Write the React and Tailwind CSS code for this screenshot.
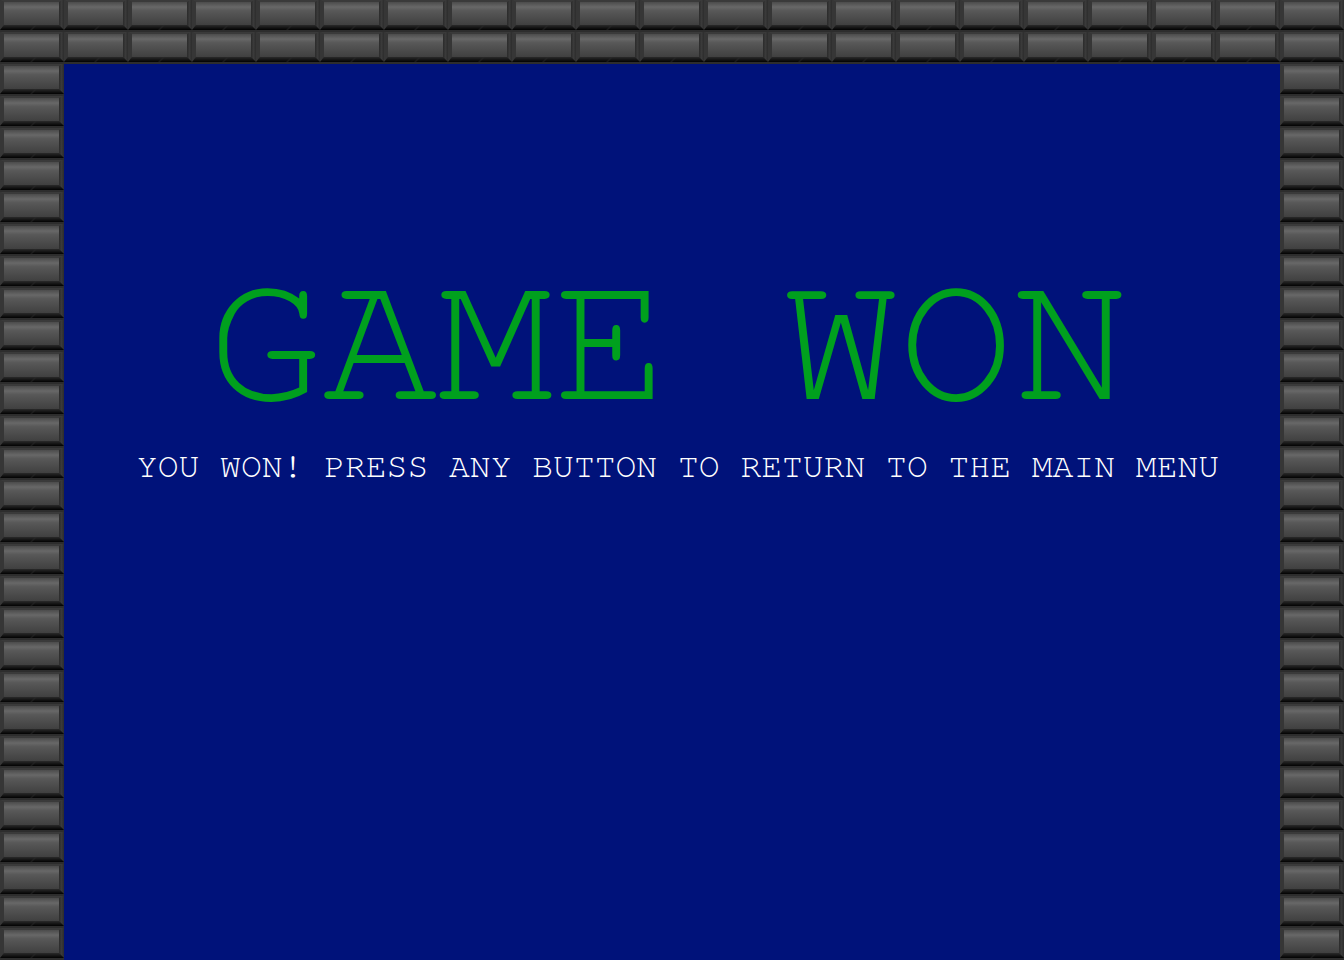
import React from "react";

function Bricks({ id }) {
  return (
    <svg width="100%" height="100%" className="block">
      <defs>
        <linearGradient id={`${id}-face`} x1="0" y1="0" x2="0" y2="1">
          <stop offset="0" stopColor="#4c4c4c" />
          <stop offset="0.22" stopColor="#686868" />
          <stop offset="0.38" stopColor="#585858" />
          <stop offset="1" stopColor="#404040" />
        </linearGradient>
        <linearGradient id={`${id}-bot`} x1="0" y1="0" x2="0" y2="1">
          <stop offset="0" stopColor="#2a2a2a" />
          <stop offset="1" stopColor="#020202" />
        </linearGradient>
        <linearGradient id={`${id}-side`} x1="0" y1="0" x2="1" y2="0">
          <stop offset="0" stopColor="#2a2a2a" />
          <stop offset="0.5" stopColor="#3a3a3a" />
          <stop offset="1" stopColor="#2c2c2c" />
        </linearGradient>
        <pattern id={id} width="64" height="32" patternUnits="userSpaceOnUse">
          <rect x="0" y="0" width="64" height="32" fill="#2e2e2e" />
          <polygon points="0,0 64,0 59,2 4,2" fill="#3a3a3a" />
          <polygon points="0,0 4,2 4,25 0,30" fill="#363636" />
          <polygon points="64,0 59,2 59,25 64,30" fill={`url(#${id}-side)`} />
          <rect x="4" y="2" width="55" height="23" fill={`url(#${id}-face)`} />
          <polygon points="4,25 59,25 64,30 0,30" fill={`url(#${id}-bot)`} />
          <polygon points="30,30 35,25 37,25 32,30" fill="#2a2a2a" opacity="0.5" />
          <rect x="0" y="30" width="64" height="2" fill="#2d2d2d" />
        </pattern>
      </defs>
      <rect width="100%" height="100%" fill={`url(#${id})`} />
    </svg>
  );
}

export default function App() {
  return (
    <div className="w-[1344px] h-[960px] flex flex-col overflow-hidden bg-[#2c2c2c]">
      <div className="h-[64px] w-full shrink-0">
        <Bricks id="top" />
      </div>
      <div className="flex flex-1">
        <div className="w-[64px] shrink-0">
          <Bricks id="left" />
        </div>
        <div className="flex-1 bg-[#00127a] flex flex-col items-center" style={{ fontFamily: 'FreeMono, "Liberation Mono", monospace' }}>
          <div className="mt-[181px] ml-[-8px] text-[192px] leading-none text-[#00a01e] whitespace-pre">GAME WON</div>
          <div className="mt-[13px] ml-[12px] text-[34.7px] leading-none text-white whitespace-pre">YOU WON! PRESS ANY BUTTON TO RETURN TO THE MAIN MENU</div>
        </div>
        <div className="w-[64px] shrink-0">
          <Bricks id="right" />
        </div>
      </div>
    </div>
  );
}
